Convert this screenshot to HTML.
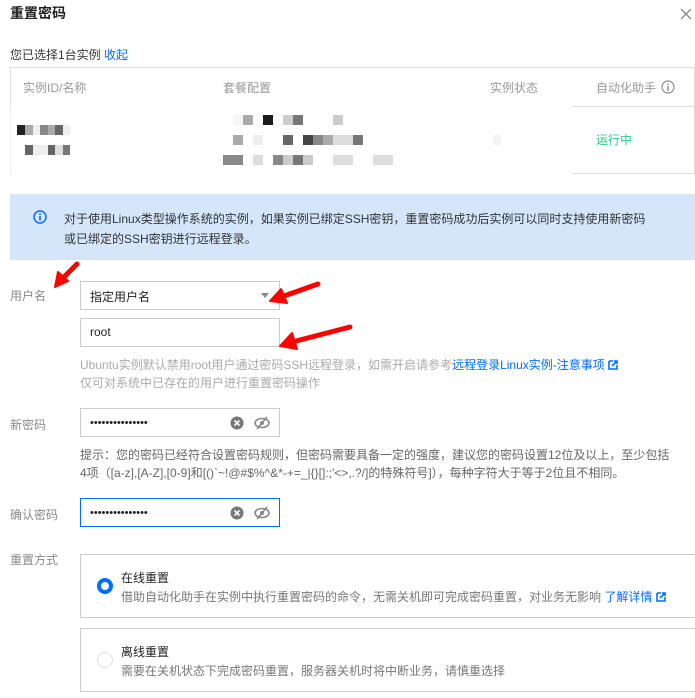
<!DOCTYPE html>
<html><head><meta charset="utf-8"><style>
*{margin:0;padding:0;box-sizing:border-box}
body{width:695px;height:698px;background:#fff;font-family:"Liberation Sans","Noto Sans CJK SC",sans-serif;font-size:12px;color:#000;position:relative;overflow:hidden}
.a{position:absolute;white-space:nowrap}
.g{color:#888}
.b{background:#888;position:absolute;height:10px}
.box{position:absolute;border:1px solid #ccc;background:#fff}
.link{color:#006eff}
</style></head><body>
<div class="a" style="left:10px;top:3px;font-size:14px;font-weight:bold;color:#222">重置密码</div>
<svg class="a" style="left:680px;top:8px" width="12" height="12"><path d="M1 1L11 11M11 1L1 11" stroke="#888" stroke-width="1.3"/></svg>
<div class="a" style="left:10px;top:46px;color:#333">您已选择1台实例 <span class="link">收起</span></div>

<div class="a" style="left:10px;top:67px;width:685px;height:107px;border-top:1px solid #ddd;border-right:1px solid #ddd"></div>
<div class="a" style="left:10px;top:67px;width:1px;height:40px;background:#ddd"></div>
<div class="a" style="left:10px;top:106px;width:1px;height:68px;background:#eee"></div>
<div class="a" style="left:572px;top:106px;width:123px;height:1px;background:#ddd"></div>
<div class="a" style="left:572px;top:173px;width:123px;height:1px;background:#ddd"></div>
<div class="a g" style="left:23px;top:79px;color:#999">实例ID/名称</div>
<div class="a g" style="left:223px;top:79px;color:#999">套餐配置</div>
<div class="a g" style="left:490px;top:79px;color:#999">实例状态</div>
<div class="a g" style="left:596px;top:79px;color:#999">自动化助手</div>
<svg class="a" style="left:661px;top:80px" width="14" height="14"><circle cx="7" cy="7" r="6" fill="none" stroke="#888" stroke-width="1.2"/><rect x="6.3" y="6" width="1.4" height="5" fill="#888"/><rect x="6.3" y="3.3" width="1.4" height="1.5" fill="#888"/></svg>
<div class="a" style="left:596px;top:131px;color:#29cc85">运行中</div>
<div class="b" style="left:17px;top:125px;width:8px;background:#222"></div><div class="b" style="left:25px;top:125px;width:8px;background:#aaa"></div><div class="b" style="left:33px;top:125px;width:7px;background:#eee"></div><div class="b" style="left:40px;top:125px;width:8px;background:#888"></div><div class="b" style="left:48px;top:125px;width:7px;background:#aaa"></div><div class="b" style="left:55px;top:125px;width:8px;background:#666"></div><div class="b" style="left:63px;top:125px;width:7px;background:#eee"></div>
<div class="b" style="left:25px;top:145px;width:8px;background:#666"></div><div class="b" style="left:33px;top:145px;width:15px;background:#eee"></div><div class="b" style="left:48px;top:145px;width:7px;background:#666"></div><div class="b" style="left:55px;top:145px;width:8px;background:#ddd"></div><div class="b" style="left:63px;top:145px;width:7px;background:#777"></div>
<div class="b" style="left:233px;top:115px;width:10px;background:#f5f5f5"></div><div class="b" style="left:243px;top:115px;width:10px;background:#aaa"></div><div class="b" style="left:263px;top:115px;width:10px;background:#1a1a1a"></div><div class="b" style="left:283px;top:115px;width:10px;background:#ccc"></div><div class="b" style="left:293px;top:115px;width:10px;background:#777"></div><div class="b" style="left:333px;top:115px;width:10px;background:#ccc"></div>
<div class="b" style="left:233px;top:135px;width:10px;background:#aaa"></div><div class="b" style="left:253px;top:135px;width:10px;background:#eee"></div><div class="b" style="left:283px;top:135px;width:10px;background:#666"></div><div class="b" style="left:303px;top:135px;width:10px;background:#444"></div><div class="b" style="left:313px;top:135px;width:10px;background:#888"></div><div class="b" style="left:323px;top:135px;width:10px;background:#aaa"></div><div class="b" style="left:333px;top:135px;width:20px;background:#ddd"></div><div class="b" style="left:353px;top:135px;width:10px;background:#777"></div>
<div class="b" style="left:223px;top:155px;width:20px;background:#888"></div><div class="b" style="left:253px;top:155px;width:10px;background:#ddd"></div><div class="b" style="left:273px;top:155px;width:10px;background:#888"></div><div class="b" style="left:283px;top:155px;width:10px;background:#ccc"></div><div class="b" style="left:293px;top:155px;width:10px;background:#777"></div><div class="b" style="left:303px;top:155px;width:10px;background:#ccc"></div><div class="b" style="left:333px;top:155px;width:20px;background:#ddd"></div><div class="b" style="left:373px;top:155px;width:20px;background:#ddd"></div>
<div class="b" style="left:493px;top:135px;width:8px;background:#f3f3f3"></div>

<div class="a" style="left:10px;top:194px;width:685px;height:66px;background:#d5e6fb"></div>
<svg class="a" style="left:33px;top:210px" width="14" height="14"><circle cx="7" cy="7" r="6" fill="none" stroke="#006eff" stroke-width="1.5"/><rect x="6.2" y="6" width="1.6" height="4.5" fill="#006eff"/><rect x="6.2" y="3.3" width="1.6" height="1.6" fill="#006eff"/></svg>
<div class="a" style="left:64px;top:209px;color:#333;line-height:20px">对于使用Linux类型操作系统的实例，如果实例已绑定SSH密钥，重置密码成功后实例可以同时支持使用新密码<br>或已绑定的SSH密钥进行远程登录。</div>

<div class="a g" style="left:10px;top:287px">用户名</div>
<div class="box" style="left:80px;top:281px;width:200px;height:29px"></div>
<div class="a" style="left:90px;top:288px;color:#222">指定用户名</div>
<svg class="a" style="left:261px;top:293px" width="8" height="5"><path d="M0 0H8L4 5Z" fill="#888"/></svg>
<div class="box" style="left:80px;top:318px;width:200px;height:29px"></div>
<div class="a" style="left:90px;top:325px;color:#222">root</div>
<div class="a" style="left:80px;top:356px;color:#aaa;line-height:18px">Ubuntu实例默认禁用root用户通过密码SSH远程登录，如需开启请参考<span class="link">远程登录Linux实例-注意事项</span> <svg width="10" height="10" style="vertical-align:-1px"><path d="M1 1H5M1 1V9H9V5" stroke="#006eff" stroke-width="1.6" fill="none"/><path d="M4 6L9 1M6 1H9V4" stroke="#006eff" stroke-width="1.6" fill="none"/></svg><br>仅可对系统中已存在的用户进行重置密码操作</div>

<div class="a g" style="left:10px;top:416px">新密码</div>
<div class="box" style="left:80px;top:408px;width:200px;height:29px"></div>
<div class="a" style="left:90px;top:417px;color:#222;font-size:11px">•••••••••••••••</div>
<svg class="a" style="left:230px;top:416px" width="14" height="14"><circle cx="7" cy="7" r="6.5" fill="#777"/><path d="M4.5 4.5L9.5 9.5M9.5 4.5L4.5 9.5" stroke="#fff" stroke-width="1.6"/></svg>
<svg class="a" style="left:254px;top:416px" width="16" height="14"><ellipse cx="8" cy="7" rx="7" ry="4.5" fill="none" stroke="#888" stroke-width="1.6"/><circle cx="8" cy="7" r="2" fill="#888"/><path d="M13 1L3 13" stroke="#888" stroke-width="1.6"/></svg>
<div class="a" style="left:80px;top:446px;color:#666;line-height:18px">提示：您的密码已经符合设置密码规则，但密码需要具备一定的强度，建议您的密码设置12位及以上，至少包括<br>4项（[a-z],[A-Z],[0-9]和[()`~!@#$%^&amp;*-+=_|{}[]:;'&lt;&gt;,.?/]的特殊符号]），每种字符大于等于2位且不相同。</div>

<div class="a g" style="left:10px;top:506px">确认密码</div>
<div class="box" style="left:80px;top:498px;width:200px;height:29px;border-color:#006eff"></div>
<div class="a" style="left:90px;top:507px;color:#222;font-size:11px">•••••••••••••••</div>
<svg class="a" style="left:230px;top:506px" width="14" height="14"><circle cx="7" cy="7" r="6.5" fill="#777"/><path d="M4.5 4.5L9.5 9.5M9.5 4.5L4.5 9.5" stroke="#fff" stroke-width="1.6"/></svg>
<svg class="a" style="left:254px;top:506px" width="16" height="14"><ellipse cx="8" cy="7" rx="7" ry="4.5" fill="none" stroke="#888" stroke-width="1.6"/><circle cx="8" cy="7" r="2" fill="#888"/><path d="M13 1L3 13" stroke="#888" stroke-width="1.6"/></svg>

<div class="a g" style="left:10px;top:551px">重置方式</div>
<div class="box" style="left:80px;top:554px;width:620px;height:64px"></div>
<div class="a" style="left:97px;top:578px;width:16px;height:16px;border-radius:50%;border:4px solid #006eff"></div>
<div class="a" style="left:121px;top:569px;color:#222">在线重置</div>
<div class="a" style="left:121px;top:588px;color:#777">借助自动化助手在实例中执行重置密码的命令，无需关机即可完成密码重置，对业务无影响 <span class="link">了解详情</span> <svg width="10" height="10" style="vertical-align:-1px"><path d="M1 1H5M1 1V9H9V5" stroke="#006eff" stroke-width="1.6" fill="none"/><path d="M4 6L9 1M6 1H9V4" stroke="#006eff" stroke-width="1.6" fill="none"/></svg></div>
<div class="box" style="left:80px;top:628px;width:620px;height:64px"></div>
<div class="a" style="left:97px;top:652px;width:16px;height:16px;border-radius:50%;border:1px solid #ddd"></div>
<div class="a" style="left:121px;top:643px;color:#222">离线重置</div>
<div class="a" style="left:121px;top:662px;color:#777">需要在关机状态下完成密码重置，服务器关机时将中断业务，请慎重选择</div>

<svg class="a" style="left:0;top:0" width="695" height="698">
<g fill="#f00" stroke="#f00" stroke-linecap="round" stroke-linejoin="round">
<path d="M77 264L63 278" stroke-width="5"/><path d="M55 287L58 272L68 281Z" stroke-width="2"/>
<path d="M318 284L284 296" stroke-width="5"/><path d="M270 301L281 289L287 303Z" stroke-width="2"/>
<path d="M350 327L296 341" stroke-width="5"/><path d="M280 346L292 333L297 349Z" stroke-width="2"/>
</g>
</svg>
</body></html>
